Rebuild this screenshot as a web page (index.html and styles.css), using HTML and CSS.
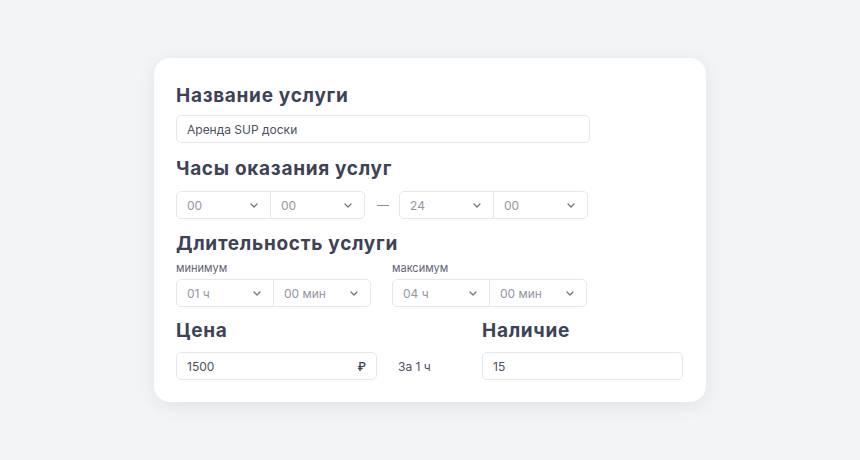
FILE: index.html
```html
<!DOCTYPE html>
<html lang="ru">
<head>
<meta charset="utf-8">
<link rel="stylesheet" href="styles.css">
</head>
<body>
<div class="card">
  <section class="field f-name">
    <h2 class="title">Название услуги</h2>
    <div class="input name">Аренда SUP доски</div>
  </section>

  <section class="field f-hours">
    <h2 class="title">Часы оказания услуг</h2>
    <div class="hours">
      <div class="group g-hours">
        <div class="seg"><span>00</span><svg class="chev" viewBox="0 0 8 5"><path d="M1 1l3 3 3-3"/></svg></div>
        <div class="seg"><span>00</span><svg class="chev" viewBox="0 0 8 5"><path d="M1 1l3 3 3-3"/></svg></div>
      </div>
      <span class="dash"></span>
      <div class="group g-hours">
        <div class="seg"><span>24</span><svg class="chev" viewBox="0 0 8 5"><path d="M1 1l3 3 3-3"/></svg></div>
        <div class="seg"><span>00</span><svg class="chev" viewBox="0 0 8 5"><path d="M1 1l3 3 3-3"/></svg></div>
      </div>
    </div>
  </section>

  <section class="field f-duration">
    <h2 class="title">Длительность услуги</h2>
    <div class="duration">
      <div class="col">
        <div class="label">минимум</div>
        <div class="group">
          <div class="seg"><span>01 ч</span><svg class="chev" viewBox="0 0 8 5"><path d="M1 1l3 3 3-3"/></svg></div>
          <div class="seg"><span>00 мин</span><svg class="chev" viewBox="0 0 8 5"><path d="M1 1l3 3 3-3"/></svg></div>
        </div>
      </div>
      <div class="col">
        <div class="label">максимум</div>
        <div class="group">
          <div class="seg"><span>04 ч</span><svg class="chev" viewBox="0 0 8 5"><path d="M1 1l3 3 3-3"/></svg></div>
          <div class="seg"><span>00 мин</span><svg class="chev" viewBox="0 0 8 5"><path d="M1 1l3 3 3-3"/></svg></div>
        </div>
      </div>
    </div>
  </section>

  <section class="field f-bottom">
    <div class="cell">
      <h2 class="title">Цена</h2>
      <div class="input price"><span>1500</span><span class="rub">₽</span></div>
    </div>
    <div class="per">За 1 ч</div>
    <div class="cell">
      <h2 class="title">Наличие</h2>
      <div class="input">15</div>
    </div>
  </section>
</div>
</body>
</html>
```

FILE: styles.css
```css
* { box-sizing: border-box; }

html, body {
  margin: 0;
  padding: 0;
}

body {
  background: #f3f4f6;
  font-family: Inter, "Noto Sans", "Liberation Sans", sans-serif;
  height: 100vh;
  display: flex;
  align-items: center;
  justify-content: center;
}

.card {
  width: 552px;
  background: #ffffff;
  border-radius: 16px;
  box-shadow: 0 4px 18px rgba(30, 35, 50, 0.08);
  padding: 26px 23px 22px 22px;
}

.title {
  margin: 0 0 8px;
  font-size: 19px;
  line-height: 24px;
  font-weight: 700;
  letter-spacing: 0.7px;
  color: #3d4256;
}

.f-name .title { margin-bottom: 7px; }

.f-hours { margin-top: 14px; }
.f-hours .title { margin-bottom: 10px; }

.f-duration { margin-top: 13px; }
.f-duration .title { margin-bottom: 5px; }

.f-bottom { margin-top: 12px; }
.f-bottom .title { margin-bottom: 9px; }

.input {
  height: 28px;
  border: 1px solid #e5e7eb;
  border-radius: 5px;
  background: #fff;
  display: flex;
  align-items: center;
  padding: 0 10px;
  font-size: 12px;
  color: #4b5060;
}

.input.name {
  width: 414px;
}

.hours {
  display: flex;
  align-items: center;
}

.dash {
  width: 12px;
  height: 1px;
  background: #8a8f9c;
  margin: 0 10px 0 12px;
}

.group {
  display: flex;
  height: 28px;
  border: 1px solid #e5e7eb;
  border-radius: 5px;
  background: #fff;
}

.g-hours {
  width: 189px;
}

.seg {
  flex: 1;
  display: flex;
  align-items: center;
  justify-content: space-between;
  padding: 0 12px 0 10px;
  font-size: 12px;
  color: #9296a3;
}

.seg + .seg {
  border-left: 1px solid #e5e7eb;
}

.chev {
  width: 8px;
  height: 5px;
  fill: none;
  stroke: #6b7080;
  stroke-width: 1.2;
  stroke-linecap: round;
  stroke-linejoin: round;
}

.duration {
  display: flex;
  gap: 21px;
}

.col {
  width: 195px;
}

.label {
  font-size: 11px;
  line-height: 14px;
  color: #5f6475;
  margin-bottom: 4px;
}

.f-bottom {
  display: grid;
  grid-template-columns: 201px 105px 201px;
  align-items: end;
}

.price {
  justify-content: space-between;
}

.rub {
  color: #3d4256;
  font-weight: 500;
}

.per {
  height: 28px;
  display: flex;
  align-items: center;
  padding-left: 21px;
  font-size: 12px;
  color: #4b5060;
}
```
